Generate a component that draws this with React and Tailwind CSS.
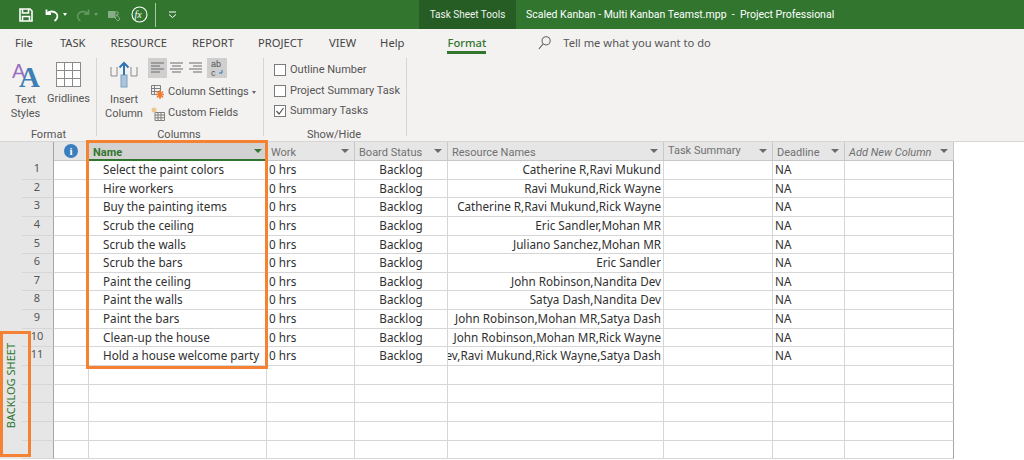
const tabs = [
  { label: 'File', className: 'ml-[15px]' },
  { label: 'TASK', className: 'ml-[27px]' },
  { label: 'RESOURCE', className: 'ml-[25px]' },
  { label: 'REPORT', className: 'ml-[25px]' },
  { label: 'PROJECT', className: 'ml-[24px]' },
  { label: 'VIEW', className: 'ml-[26px]' },
  { label: 'Help', className: 'ml-[24px]' },
];

const tasks = [
  ['Select the paint colors', 'Catherine R,Ravi Mukund'],
  ['Hire workers', 'Ravi Mukund,Rick Wayne'],
  ['Buy the painting items', 'Catherine R,Ravi Mukund,Rick Wayne'],
  ['Scrub the ceiling', 'Eric Sandler,Mohan MR'],
  ['Scrub the walls', 'Juliano Sanchez,Mohan MR'],
  ['Scrub the bars', 'Eric Sandler'],
  ['Paint the ceiling', 'John Robinson,Nandita Dev'],
  ['Paint the walls', 'Satya Dash,Nandita Dev'],
  ['Paint the bars', 'John Robinson,Mohan MR,Satya Dash'],
  ['Clean-up the house', 'John Robinson,Mohan MR,Rick Wayne'],
  ['Hold a house welcome party', 'Nandita Dev,Ravi Mukund,Rick Wayne,Satya Dash'],
];

const gridCols = 'grid grid-cols-[22px_32px_35px_178px_88px_93px_216px_109px_72px_109px] w-[954px]';
const cell = 'border-r border-b border-[#d6d6d6] overflow-hidden whitespace-nowrap';

function Caret({ className = 'border-t-[#6b6b6b]' }) {
  return <span className={`ml-auto mr-[5px] w-0 h-0 border-x-[4px] border-x-transparent border-t-[4px] ${className}`} />;
}

function Header({ label, className = '', textClass = 'translate-y-[2px]' }) {
  return (
    <div className={`flex items-center pl-[4px] border-r border-b border-[#c8c8c8] bg-[#e6e6e6] text-[#707070] text-[11px] font-['Roboto',sans-serif] whitespace-nowrap ${className}`}>
      <span className={textClass}>{label}</span>
      <Caret />
    </div>
  );
}

function SaveIcon() {
  return (
    <svg width="14" height="14" viewBox="0 0 14 14" fill="none" stroke="white" strokeWidth="1.6">
      <path d="M1 1h10l2 2v10H1z" />
      <path d="M3.500 1v4h6V1M3.500 13V8.500h7V13" />
    </svg>
  );
}

function TitleBar() {
  return (
    <div className="h-[29px] bg-[#31752f] flex items-center text-white text-[10.5px] font-['Roboto',sans-serif]">
      <div className="w-[419px] flex items-center pl-[19px]">
        <SaveIcon />
        <svg className="ml-[12px]" width="14" height="14" viewBox="0 0 14 14" fill="none" stroke="white" strokeWidth="1.8">
          <path d="M1.500 1.500v4.500h4.500M1.800 5.800C4 2.800 9 2.800 11.500 5.500c1.800 2.200 1 5.500-2 7.500" />
        </svg>
        <span className="ml-[4px] w-0 h-0 border-x-[2.5px] border-x-transparent border-t-[3px] border-t-white" />
        <svg className="ml-[9px] opacity-40" width="14" height="14" viewBox="0 0 14 14" fill="none" stroke="#b7d3b6" strokeWidth="1.5">
          <path d="M12.500 1.500v4.500H8M12.200 5.800C10 2.800 5 2.800 2.500 5.500c-1.800 2.200-1 5.500 2 7.500" />
        </svg>
        <span className="ml-[4px] w-0 h-0 border-x-[2.5px] border-x-transparent border-t-[3px] border-t-[#6f9f6d]" />
        <svg className="ml-[9px]" width="15" height="14" viewBox="0 0 15 14">
          <rect x="1" y="3" width="7" height="7" fill="#86ad85" />
          <path d="M8 4h3v3H8zM10 7l3 4-2 2-3-3z" fill="none" stroke="#86ad85" />
        </svg>
        <svg className="ml-[9px]" width="17" height="17" viewBox="0 0 17 17" fill="none">
          <circle cx="8.500" cy="8.500" r="7.500" stroke="white" strokeWidth="1.1" />
          <text x="3.600" y="12" fontSize="10" fontStyle="italic" fontFamily="'Liberation Serif', serif" fill="white">fx</text>
        </svg>
        <span className="ml-[7px] w-px h-[24px] bg-[#a9c8a8]" />
        <svg className="ml-[12px]" width="9" height="8" viewBox="0 0 9 8" fill="none" stroke="white">
          <path d="M1 1h7" />
          <path d="M1 3.500l3.500 3 3.500-3" />
        </svg>
      </div>
      <div className="w-[97px] h-full bg-[#265d25] flex items-center justify-center text-[10px] text-[#eef4ee] whitespace-nowrap">Task Sheet Tools</div>
      <div className="ml-[10px] whitespace-nowrap">Scaled Kanban - Multi Kanban Teamst.mpp&nbsp; -&nbsp; Project Professional</div>
    </div>
  );
}

function TabRow() {
  return (
    <div className="h-[30px] flex items-center pb-[2px] text-[11.2px] text-[#444444]">
      {tabs.map(tab => (
        <span key={tab.label} className={tab.className}>{tab.label}</span>
      ))}
      <span className="ml-[43px] relative font-medium text-[#31752f]">
        Format
        <span className="absolute left-0 right-0 top-[16px] h-[3px] bg-[#31752f]" />
      </span>
      <svg className="ml-[52px]" width="13" height="14" viewBox="0 0 12 13" fill="none" stroke="#666666" strokeWidth="1">
        <circle cx="7.500" cy="4.500" r="3.800" />
        <path d="M4.800 7.400L.8 12" />
      </svg>
      <span className="ml-[12px] text-[#555555]">Tell me what you want to do</span>
    </div>
  );
}

function RibbonLabel({ children, className = '' }) {
  return <div className={`text-center text-[#555555] leading-[14px] ${className}`}>{children}</div>;
}

function AlignIcon({ kind, active }) {
  const rows = {
    left: ['M3 5h13', 'M3 8h9', 'M3 11h13', 'M3 14h9'],
    center: ['M3 5h13', 'M5 8h9', 'M3 11h13', 'M5 14h9'],
    right: ['M3 5h13', 'M7 8h9', 'M3 11h13', 'M7 14h9'],
  };
  return (
    <svg className={active ? 'bg-[#cfcfcf]' : ''} width="19" height="20" viewBox="0 0 19 20" fill="none" stroke="#6b6b6b">
      {rows[kind].map(d => <path key={d} d={d} />)}
    </svg>
  );
}

function CheckRow({ label, checked }) {
  return (
    <div className="flex items-center h-[20.5px]">
      <span className="w-[12px] h-[12px] border border-[#7a7a7a] bg-white flex items-center justify-center">
        {checked && (
          <svg width="10" height="10" viewBox="0 0 10 10" fill="none" stroke="#555555" strokeWidth="1.2">
            <path d="M1.500 5l2.500 3 4.500-6" />
          </svg>
        )}
      </span>
      <span className="ml-[4px]">{label}</span>
    </div>
  );
}

function Ribbon() {
  return (
    <div className="h-[83px] flex text-[11px] text-[#555555] font-['Roboto',sans-serif]">
      {/* Format */}
      <div className="w-[96px] flex flex-col">
        <div className="flex h-[62px] pt-[2px]">
          <div className="w-[47px] ml-[2px] flex flex-col items-center">
            <svg className="overflow-visible" width="30" height="27" viewBox="0 0 30 27">
              <text x="1" y="17" fontSize="20" fontFamily="'Liberation Sans', sans-serif" fill="#9a6fc0">A</text>
              <text x="8" y="26" fontSize="29" fontWeight="bold" fontFamily="'Liberation Serif', serif" fill="#3f7fb5">A</text>
            </svg>
            <RibbonLabel className="mt-[5px]">Text<br />Styles</RibbonLabel>
          </div>
          <div className="flex flex-col items-center -ml-[2px]">
            <div className="grid grid-cols-3 grid-rows-3 w-[25px] h-[25px] border-l border-t border-[#8a8a8a] bg-white mt-[1px]">
              {[...Array(9).keys()].map(i => <span key={i} className="border-r border-b border-[#8a8a8a]" />)}
            </div>
            <RibbonLabel className="mt-[5px]">Gridlines</RibbonLabel>
          </div>
        </div>
        <RibbonLabel className="mt-[7px] pl-[1px]">Format</RibbonLabel>
      </div>
      <span className="w-px h-[78px] mt-[-1px] bg-[#d6d6d6]" />

      {/* Columns */}
      <div className="w-[166px] flex flex-col">
        <div className="flex h-[62px]">
          <div className="w-[48px] ml-[3px] flex flex-col items-center shrink-0">
            <svg className="mt-[2px]" width="28" height="27" viewBox="0 0 28 27" fill="none">
              <path d="M1 6v9h6V6M21 6v9h6V6" stroke="#8a8a8a" />
              <rect x="11" y="14" width="6" height="12" fill="#a9c4dc" stroke="#7f9fbc" />
              <path d="M14 14V2M9.500 6.500L14 2l4.500 4.500" stroke="#2e75b5" strokeWidth="2" />
            </svg>
            <RibbonLabel className="mt-[5px]">Insert<br />Column</RibbonLabel>
          </div>
          <div className="flex-1">
            <div className="flex -mt-[1px]">
              <AlignIcon kind="left" active />
              <AlignIcon kind="center" />
              <AlignIcon kind="right" />
              <span className="w-[20px] h-[20px] ml-[2px] bg-[#cfcfcf]">
                <svg width="20" height="20" viewBox="0 0 20 20">
                  <text x="4" y="9" fontSize="9" fontFamily="'Liberation Sans', sans-serif" fill="#555555">ab</text>
                  <text x="4" y="18" fontSize="9" fontFamily="'Liberation Sans', sans-serif" fill="#555555">c</text>
                  <path d="M15 12v3h-3" fill="none" stroke="#2e75b5" />
                </svg>
              </span>
            </div>
            <div className="flex items-center h-[21px] mt-[4px] ml-[3px]">
              <svg width="14" height="15" viewBox="0 0 14 15" fill="none">
                <path d="M.5.5h9v9h-9zM3.500.5v9M.5 3.500h9M.5 6.500h9" stroke="#7f7f7f" />
                <path d="M9 5v9M5 9.500h8M6 6.500l6 6M12 6.500l-6 6" stroke="#ed7d31" strokeWidth="1.6" />
              </svg>
              <span className="ml-[3px]">Column Settings</span>
              <span className="ml-[3px] w-0 h-0 border-x-[2.5px] border-x-transparent border-t-[3px] border-t-[#666666]" />
            </div>
            <div className="flex items-center h-[21px] ml-[3px]">
              <svg width="14" height="14" viewBox="0 0 14 14" fill="none">
                <path d="M4 5.500h9.500v8H4zM7 5.500v8M10 5.500v8M4 8h9.500M4 10.800h9.500" stroke="#7f7f7f" />
                <circle cx="3" cy="3" r="2.500" fill="#f2c58f" />
              </svg>
              <span className="ml-[3px]">Custom Fields</span>
            </div>
          </div>
        </div>
        <RibbonLabel className="mt-[7px] pr-[2px]">Columns</RibbonLabel>
      </div>
      <span className="w-px h-[78px] mt-[-1px] bg-[#d6d6d6]" />

      {/* Show/Hide */}
      <div className="w-[142px] flex flex-col">
        <div className="h-[62px] pl-[10px] pt-[1px]">
          <CheckRow label="Outline Number" />
          <CheckRow label="Project Summary Task" />
          <CheckRow label="Summary Tasks" checked />
        </div>
        <RibbonLabel className="mt-[7px] pr-[2px]">Show/Hide</RibbonLabel>
      </div>
      <span className="w-px h-[78px] mt-[-1px] bg-[#d6d6d6]" />
    </div>
  );
}

function SheetHeader() {
  return (
    <div className={`${gridCols} h-[19px]`}>
      <div className="bg-[#e6e6e6]" />
      <div className="bg-[#e6e6e6] border-r border-r-[#a6a6a6]" />
      <div className="bg-[#e6e6e6] border-r border-b border-[#c8c8c8] flex items-center justify-center">
        <span className="w-[14px] h-[14px] rounded-full bg-[#3a7ebf] text-white text-[11px] font-bold leading-[14px] text-center font-['Liberation_Serif',serif]">i</span>
      </div>
      <div className="flex items-center pl-[4px] bg-[#d2d2d2] border-b-2 border-[#31752f] text-[#31752f] text-[11px] font-bold font-['Roboto',sans-serif]">
        <span className="translate-y-[3px]">Name</span>
        <Caret className="border-t-[#31752f]" />
      </div>
      <Header label="Work" />
      <Header label="Board Status" />
      <Header label="Resource Names" />
      <Header label="Task Summary" textClass="translate-y-0" />
      <Header label="Deadline" />
      <Header label="Add New Column" textClass="italic translate-y-[2px]" />
    </div>
  );
}

function SheetRow({ index, task }) {
  return (
    <div className={`${gridCols} h-[18.65px] text-[11.7px] leading-[17px] text-[#303030]`}>
      <div className="bg-[#e6e6e6]" />
      <div className="bg-[#e6e6e6] border-r border-b border-r-[#a6a6a6] border-b-[#d6d6d6] text-center text-[11px] leading-[14px] text-[#555555] pr-[1px]">
        {task ? index + 1 : ''}
      </div>
      <div className={cell} />
      <div className={`${cell} pl-[14px]`}>{task?.[0]}</div>
      <div className={`${cell} pl-[2px]`}>{task ? '0 hrs' : ''}</div>
      <div className={`${cell} text-center`}>{task ? 'Backlog' : ''}</div>
      <div className={`${cell} flex justify-end pr-[2px]`}>
        <span className="shrink-0">{task?.[1]}</span>
      </div>
      <div className={cell} />
      <div className={`${cell} pl-[2px]`}>{task ? 'NA' : ''}</div>
      <div className={`${cell} border-r-[#a6a6a6]`} />
    </div>
  );
}

export default function App() {
  const rows = [...tasks, ...Array(5).fill(null)];

  return (
    <div className="relative w-[1024px] h-[460px] overflow-hidden bg-white font-['Noto_Sans','Open_Sans',sans-serif]">
      <TitleBar />
      <div className="bg-[#f3f2f1] border-b border-[#d6d6d6] h-[113px]">
        <TabRow />
        <Ribbon />
      </div>
      <SheetHeader />
      {rows.map((task, i) => <SheetRow key={i} index={i} task={task} />)}

      {/* orange callouts */}
      <div className="absolute left-[86px] top-[140px] w-[182px] h-[229px] border-[3px] border-[#f58233]" />
      <div className="absolute left-0 top-[331px] w-[31px] h-[126px] border-[3px] border-[#f58233] flex items-center justify-center pr-[8px] pb-[17px]">
        <span className="[writing-mode:vertical-rl] rotate-180 text-[11px] text-[#31752f] whitespace-nowrap">BACKLOG SHEET</span>
      </div>
    </div>
  );
}
